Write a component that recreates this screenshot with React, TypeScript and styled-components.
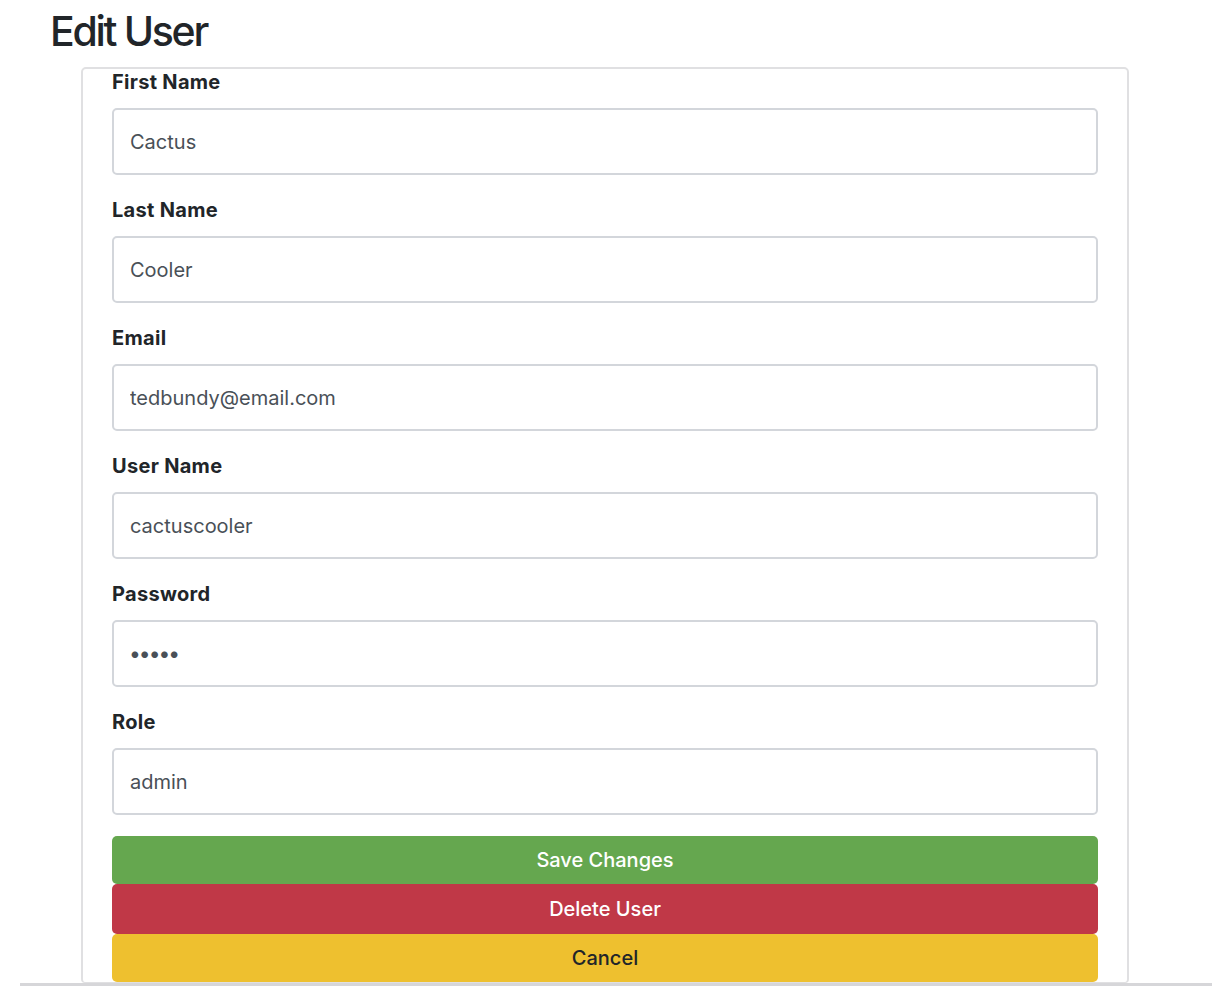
import React from "react";
import styled, { createGlobalStyle } from "styled-components";

const GlobalStyle = createGlobalStyle`
  html, body { margin: 0; padding: 0; background: #ffffff; }
  body {
    font-family: Inter, "Noto Sans", "Liberation Sans", sans-serif;
    color: #212529;
  }
  * { box-sizing: border-box; }
`;

const Page = styled.div`
  width: 1212px;
  height: 986px;
  overflow: hidden;
  display: flex;
  flex-direction: column;
`;

const Title = styled.h1`
  margin: 7px 0 11px 50px;
  font-size: 41px;
  line-height: 49px;
  font-weight: 500;
  letter-spacing: -2.3px;
  color: #212529;
`;

const Card = styled.div`
  margin-left: 81px;
  width: 1048px;
  border: 2px solid #e0e0e2;
  border-bottom-width: 1px;
  border-radius: 5px 5px 4px 4px;
  padding: 0 29px;
  display: flex;
  flex-direction: column;
`;

const Group = styled.div`
  display: flex;
  flex-direction: column;
  margin-bottom: 22px;
  &:last-of-type { margin-bottom: 21px; }
`;

const Label = styled.label`
  font-size: 20px;
  line-height: 26px;
  font-weight: 700;
  letter-spacing: 0.3px;
  color: #212529;
  margin-bottom: 13px;
`;

const Input = styled.input`
  height: 67px;
  width: 100%;
  border: 2px solid #d3d6db;
  border-radius: 5px;
  padding: 0 16px;
  font-family: inherit;
  font-size: 20px;
  color: #495057;
  background: #ffffff;
  outline: none;
  &[type="password"] { letter-spacing: -2px; font-size: 21px; padding-left: 15px; }
`;

const Button = styled.button<{ $bg: string; $fg: string; $h: number }>`
  height: ${(p) => p.$h}px;
  width: 100%;
  border: none;
  border-radius: 5px;
  background: ${(p) => p.$bg};
  color: ${(p) => p.$fg};
  font-family: inherit;
  font-size: 20px;
  font-weight: 500;
  cursor: pointer;
  display: flex;
  align-items: center;
  justify-content: center;
`;

const Rule = styled.div`
  margin-left: 20px;
  height: 3px;
  background: #d6d6d9;
`;

const fields = [
  { label: "First Name", value: "Cactus", type: "text" },
  { label: "Last Name", value: "Cooler", type: "text" },
  { label: "Email", value: "tedbundy@email.com", type: "text" },
  { label: "User Name", value: "cactuscooler", type: "text" },
  { label: "Password", value: "12345", type: "password" },
  { label: "Role", value: "admin", type: "text" },
];

export default function App() {
  return (
    <Page>
      <GlobalStyle />
      <Title>Edit User</Title>
      <Card>
        {fields.map((f) => (
          <Group key={f.label}>
            <Label>{f.label}</Label>
            <Input type={f.type} defaultValue={f.value} />
          </Group>
        ))}
        <Button $bg="#65a74f" $fg="#ffffff" $h={48}>Save Changes</Button>
        <Button $bg="#c03847" $fg="#ffffff" $h={50}>Delete User</Button>
        <Button $bg="#eec02f" $fg="#212529" $h={48}>Cancel</Button>
      </Card>
      <Rule />
    </Page>
  );
}
